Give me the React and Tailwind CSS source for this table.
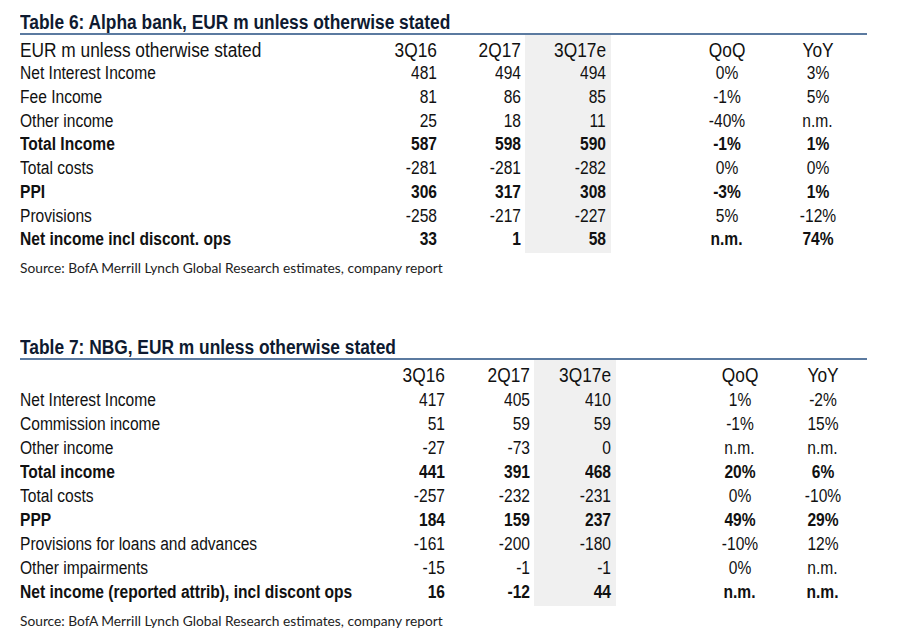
const table6 = {
  title: "Table 6: Alpha bank, EUR m unless otherwise stated",
  header: "EUR m unless otherwise stated",
  rows: [
    ["Net Interest Income", "481", "494", "494", "0%", "3%"],
    ["Fee Income", "81", "86", "85", "-1%", "5%"],
    ["Other income", "25", "18", "11", "-40%", "n.m."],
    ["Total Income", "587", "598", "590", "-1%", "1%", true],
    ["Total costs", "-281", "-281", "-282", "0%", "0%"],
    ["PPI", "306", "317", "308", "-3%", "1%", true],
    ["Provisions", "-258", "-217", "-227", "5%", "-12%"],
    ["Net income incl discont. ops", "33", "1", "58", "n.m.", "74%", true],
  ],
};

const table7 = {
  title: "Table 7: NBG, EUR m unless otherwise stated",
  header: "",
  rows: [
    ["Net Interest Income", "417", "405", "410", "1%", "-2%"],
    ["Commission income", "51", "59", "59", "-1%", "15%"],
    ["Other income", "-27", "-73", "0", "n.m.", "n.m."],
    ["Total income", "441", "391", "468", "20%", "6%", true],
    ["Total costs", "-257", "-232", "-231", "0%", "-10%"],
    ["PPP", "184", "159", "237", "49%", "29%", true],
    ["Provisions for loans and advances", "-161", "-200", "-180", "-10%", "12%"],
    ["Other impairments", "-15", "-1", "-1", "0%", "n.m."],
    ["Net income (reported attrib), incl discont ops", "16", "-12", "44", "n.m.", "n.m.", true],
  ],
};

// Arial Narrow look: Liberation Sans squeezed horizontally
const sans = "font-['Liberation_Sans',Arial,sans-serif]";

function Cell({ children, align }) {
  const origin =
    align === "left" ? "origin-left" : align === "right" ? "origin-right" : "origin-center";
  return (
    <span className={`inline-block whitespace-nowrap scale-x-[0.865] ${origin}`}>{children}</span>
  );
}

function Row({ cells, bold, grid, h, size = "" }) {
  return (
    <div className={`grid ${grid} ${h} ${size} items-center ${bold ? "font-bold" : ""}`}>
      <div className="whitespace-nowrap">
        <Cell align="left">{cells[0]}</Cell>
      </div>
      <div className="text-right">
        <Cell align="right">{cells[1]}</Cell>
      </div>
      <div className="text-right pr-[4px]">
        <Cell align="right">{cells[2]}</Cell>
      </div>
      <div className="pr-[5px] bg-[#f0f0f0] h-full flex items-center justify-end">
        <Cell align="right">{cells[3]}</Cell>
      </div>
      <div />
      <div className="text-center">
        <Cell>{cells[4]}</Cell>
      </div>
      <div />
      <div className="text-center">
        <Cell>{cells[5]}</Cell>
      </div>
    </div>
  );
}

function Table({ data, grid, headH, rowH }) {
  return (
    <div className="pl-[20px]">
      <h2 className={`${sans} font-bold text-[20px] leading-[21px] text-[#0e1a30] whitespace-nowrap`}>
        <span className="inline-block scale-x-[0.868] origin-left">{data.title}</span>
      </h2>
      <div className="w-[847px] h-[2px] bg-[#5b7aa0]" />
      <div className={`${sans} text-[18px] text-[#111]`}>
        <Row
          cells={[data.header, "3Q16", "2Q17", "3Q17e", "QoQ", "YoY"]}
          grid={grid}
          h={headH}
          size="text-[20px]"
        />
        {data.rows.map((r) => (
          <Row key={r[0]} cells={r} bold={r[6]} grid={grid} h={rowH} />
        ))}
      </div>
      <p className="font-['Lato',sans-serif] text-[13.75px] text-[#222] mt-[9px] leading-[18px]">
        Source: BofA Merrill Lynch Global Research estimates, company report
      </p>
    </div>
  );
}

export default function App() {
  return (
    <div className="w-[905px] h-[638px] bg-white overflow-hidden">
      <div className="pt-[12px]">
        <Table
          data={table6}
          grid="grid-cols-[332px_85px_88px_86px_76px_80px_11px_80px]"
          headH="h-[25px]"
          rowH="h-[23.75px]"
        />
      </div>
      <div className="pt-[60px]">
        <Table
          data={table7}
          grid="grid-cols-[340px_85px_89px_82px_84px_80px_3px_80px]"
          headH="h-[27px]"
          rowH="h-[24px]"
        />
      </div>
    </div>
  );
}
